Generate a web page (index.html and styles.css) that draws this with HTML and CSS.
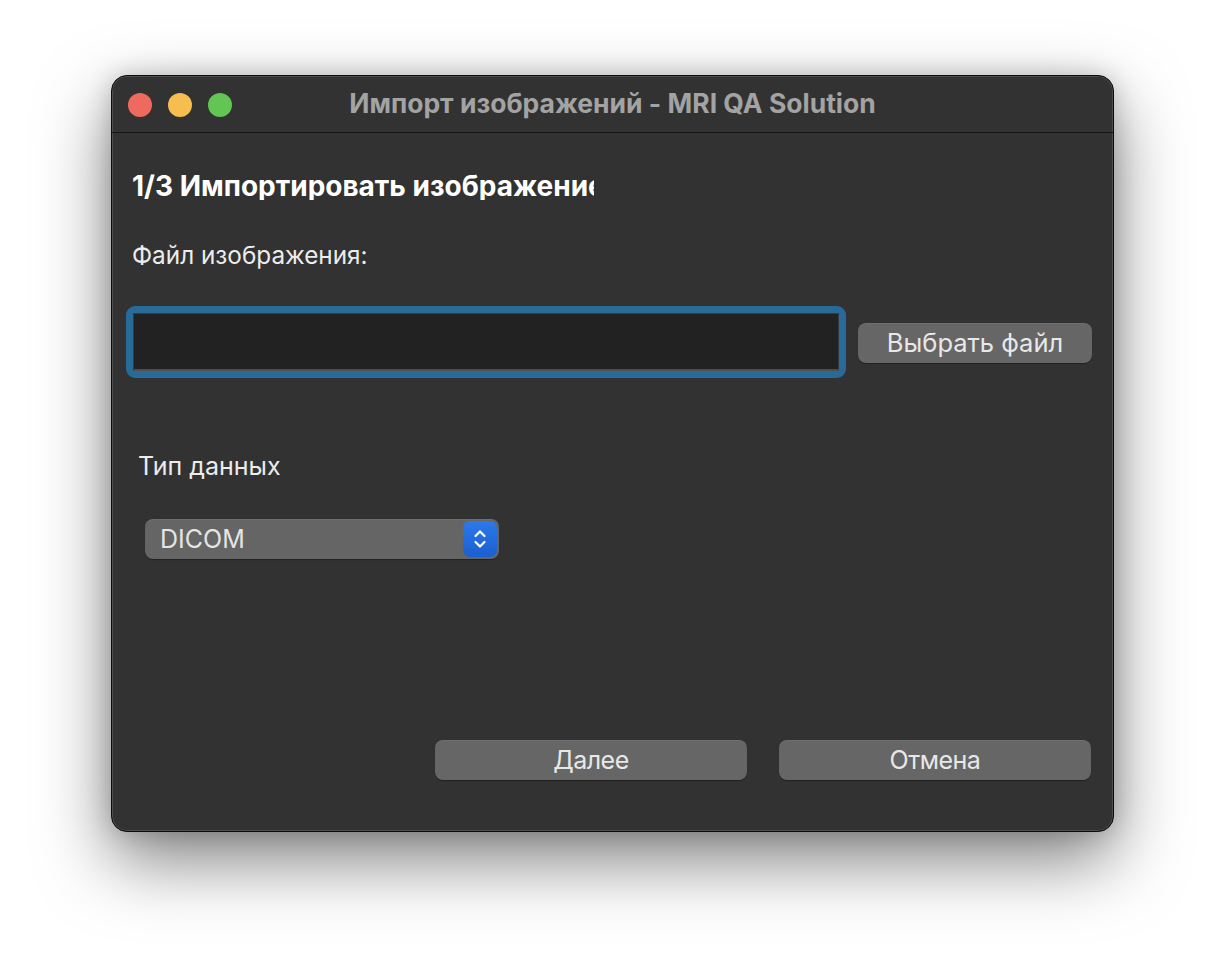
FILE: index.html
```html
<!DOCTYPE html>
<html lang="ru">
<head>
<meta charset="utf-8">
<title>Импорт изображений - MRI QA Solution</title>
<link rel="stylesheet" href="styles.css">
</head>
<body>
<div class="window">
  <div class="titlebar">
    <div class="lights">
      <span class="light red"></span>
      <span class="light yellow"></span>
      <span class="light green"></span>
    </div>
    <div class="title">Импорт изображений - MRI QA Solution</div>
    <div class="spacer"></div>
  </div>
  <div class="content">
    <div class="heading">1/3 Импортировать изображение</div>
    <div class="label file-label">Файл изображения:</div>
    <div class="file-row">
      <div class="focus-ring"><div class="field"></div></div>
      <button class="btn choose">Выбрать файл</button>
    </div>
    <div class="label type-label">Тип данных</div>
    <div class="combo">
      <span class="combo-text">DICOM</span>
      <span class="combo-arrows">
        <svg width="16" height="24" viewBox="0 0 16 24" fill="none" stroke="#fff" stroke-width="2.2" stroke-linecap="round" stroke-linejoin="round"><path d="M3.5 9 L8 4.5 L12.5 9"/><path d="M3.5 15 L8 19.5 L12.5 15"/></svg>
      </span>
    </div>
    <div class="actions">
      <button class="btn action">Далее</button>
      <button class="btn action">Отмена</button>
    </div>
  </div>
</div>
</body>
</html>
```
FILE: styles.css
```css
html, body {
  margin: 0;
  padding: 0;
  background: #ffffff;
  width: 1226px;
  height: 980px;
  overflow: hidden;
  font-family: Inter, "Noto Sans", "Liberation Sans", sans-serif;
}
body {
  padding-top: 75px;
  box-sizing: border-box;
}
.window {
  margin-left: 111px;
  width: 1003px;
  height: 757px;
  box-sizing: border-box;
  border: 1px solid #0c0c0c;
  border-radius: 16px;
  background: #323232;
  box-shadow: inset 0 0 0 1px #4e4e4e, 0 28px 70px rgba(0, 0, 0, 0.5), 0 0 24px rgba(0, 0, 0, 0.18);
  display: flex;
  flex-direction: column;
}
.titlebar {
  height: 56px;
  border-bottom: 1px solid #141414;
  display: grid;
  grid-template-columns: 1fr auto 1fr;
  align-items: center;
  padding: 0 16px;
}
.lights {
  display: flex;
  gap: 16px;
  padding-top: 2px;
}
.light {
  width: 24px;
  height: 24px;
  border-radius: 50%;
  display: block;
}
.red { background: #ee6a5f; }
.yellow { background: #f5be4f; }
.green { background: #62c554; }
.title {
  color: #a3a3a3;
  font-weight: 700;
  font-size: 26.5px;
  line-height: 30px;
  padding-bottom: 3px;
}
.content {
  padding: 0 0 0 20px;
  display: flex;
  flex-direction: column;
  align-items: flex-start;
}
.heading {
  margin-top: 39px;
  width: 462px;
  overflow: hidden;
  white-space: nowrap;
  color: #ffffff;
  font-weight: 700;
  font-size: 28px;
  line-height: 28px;
}
.label {
  color: #ececec;
  font-size: 25px;
  line-height: 24px;
}
.file-label {
  margin-top: 43px;
  font-size: 24.3px;
}
.file-row {
  margin-top: 39px;
  margin-left: -6px;
  display: flex;
  align-items: center;
  gap: 12px;
}
.focus-ring {
  width: 720px;
  height: 72px;
  box-sizing: border-box;
  border: 7px solid #286a98;
  border-radius: 9px;
}
.field {
  height: 100%;
  box-sizing: border-box;
  background: #222222;
  border: 1px solid #3a3a3a;
  border-bottom: 2px solid #4f4f4f;
}
.btn {
  font-family: inherit;
  border: none;
  background: #666666;
  color: #e8e8e8;
  border-radius: 8px;
  box-shadow: 0 1px 1px rgba(0, 0, 0, 0.35), inset 0 1px 0 rgba(255, 255, 255, 0.06);
  padding: 0;
  cursor: default;
  line-height: 24px;
}
.choose {
  width: 234px;
  height: 40px;
  font-size: 25.5px;
  margin-top: 2px;
}
.type-label {
  margin-top: 76px;
  margin-left: 6px;
}
.combo {
  margin-top: 41px;
  margin-left: 13px;
  width: 354px;
  height: 40px;
  box-sizing: border-box;
  background: #656565;
  border-radius: 8px;
  box-shadow: 0 1px 1px rgba(0, 0, 0, 0.35), inset 0 1px 0 rgba(255, 255, 255, 0.06);
  display: flex;
  align-items: center;
  justify-content: space-between;
  padding: 0 2px 0 15px;
}
.combo-text {
  color: #e4e4e4;
  font-size: 25px;
  line-height: 24px;
}
.combo-arrows {
  width: 34px;
  height: 36px;
  border-radius: 7px;
  background: linear-gradient(#2c79ea, #1b5fd0);
  display: flex;
  align-items: center;
  justify-content: center;
}
.actions {
  margin-top: 181px;
  align-self: stretch;
  display: flex;
  justify-content: flex-end;
  gap: 32px;
  padding-right: 22px;
}
.action {
  width: 312px;
  height: 40px;
  font-size: 25px;
  letter-spacing: -0.5px;
}
```
